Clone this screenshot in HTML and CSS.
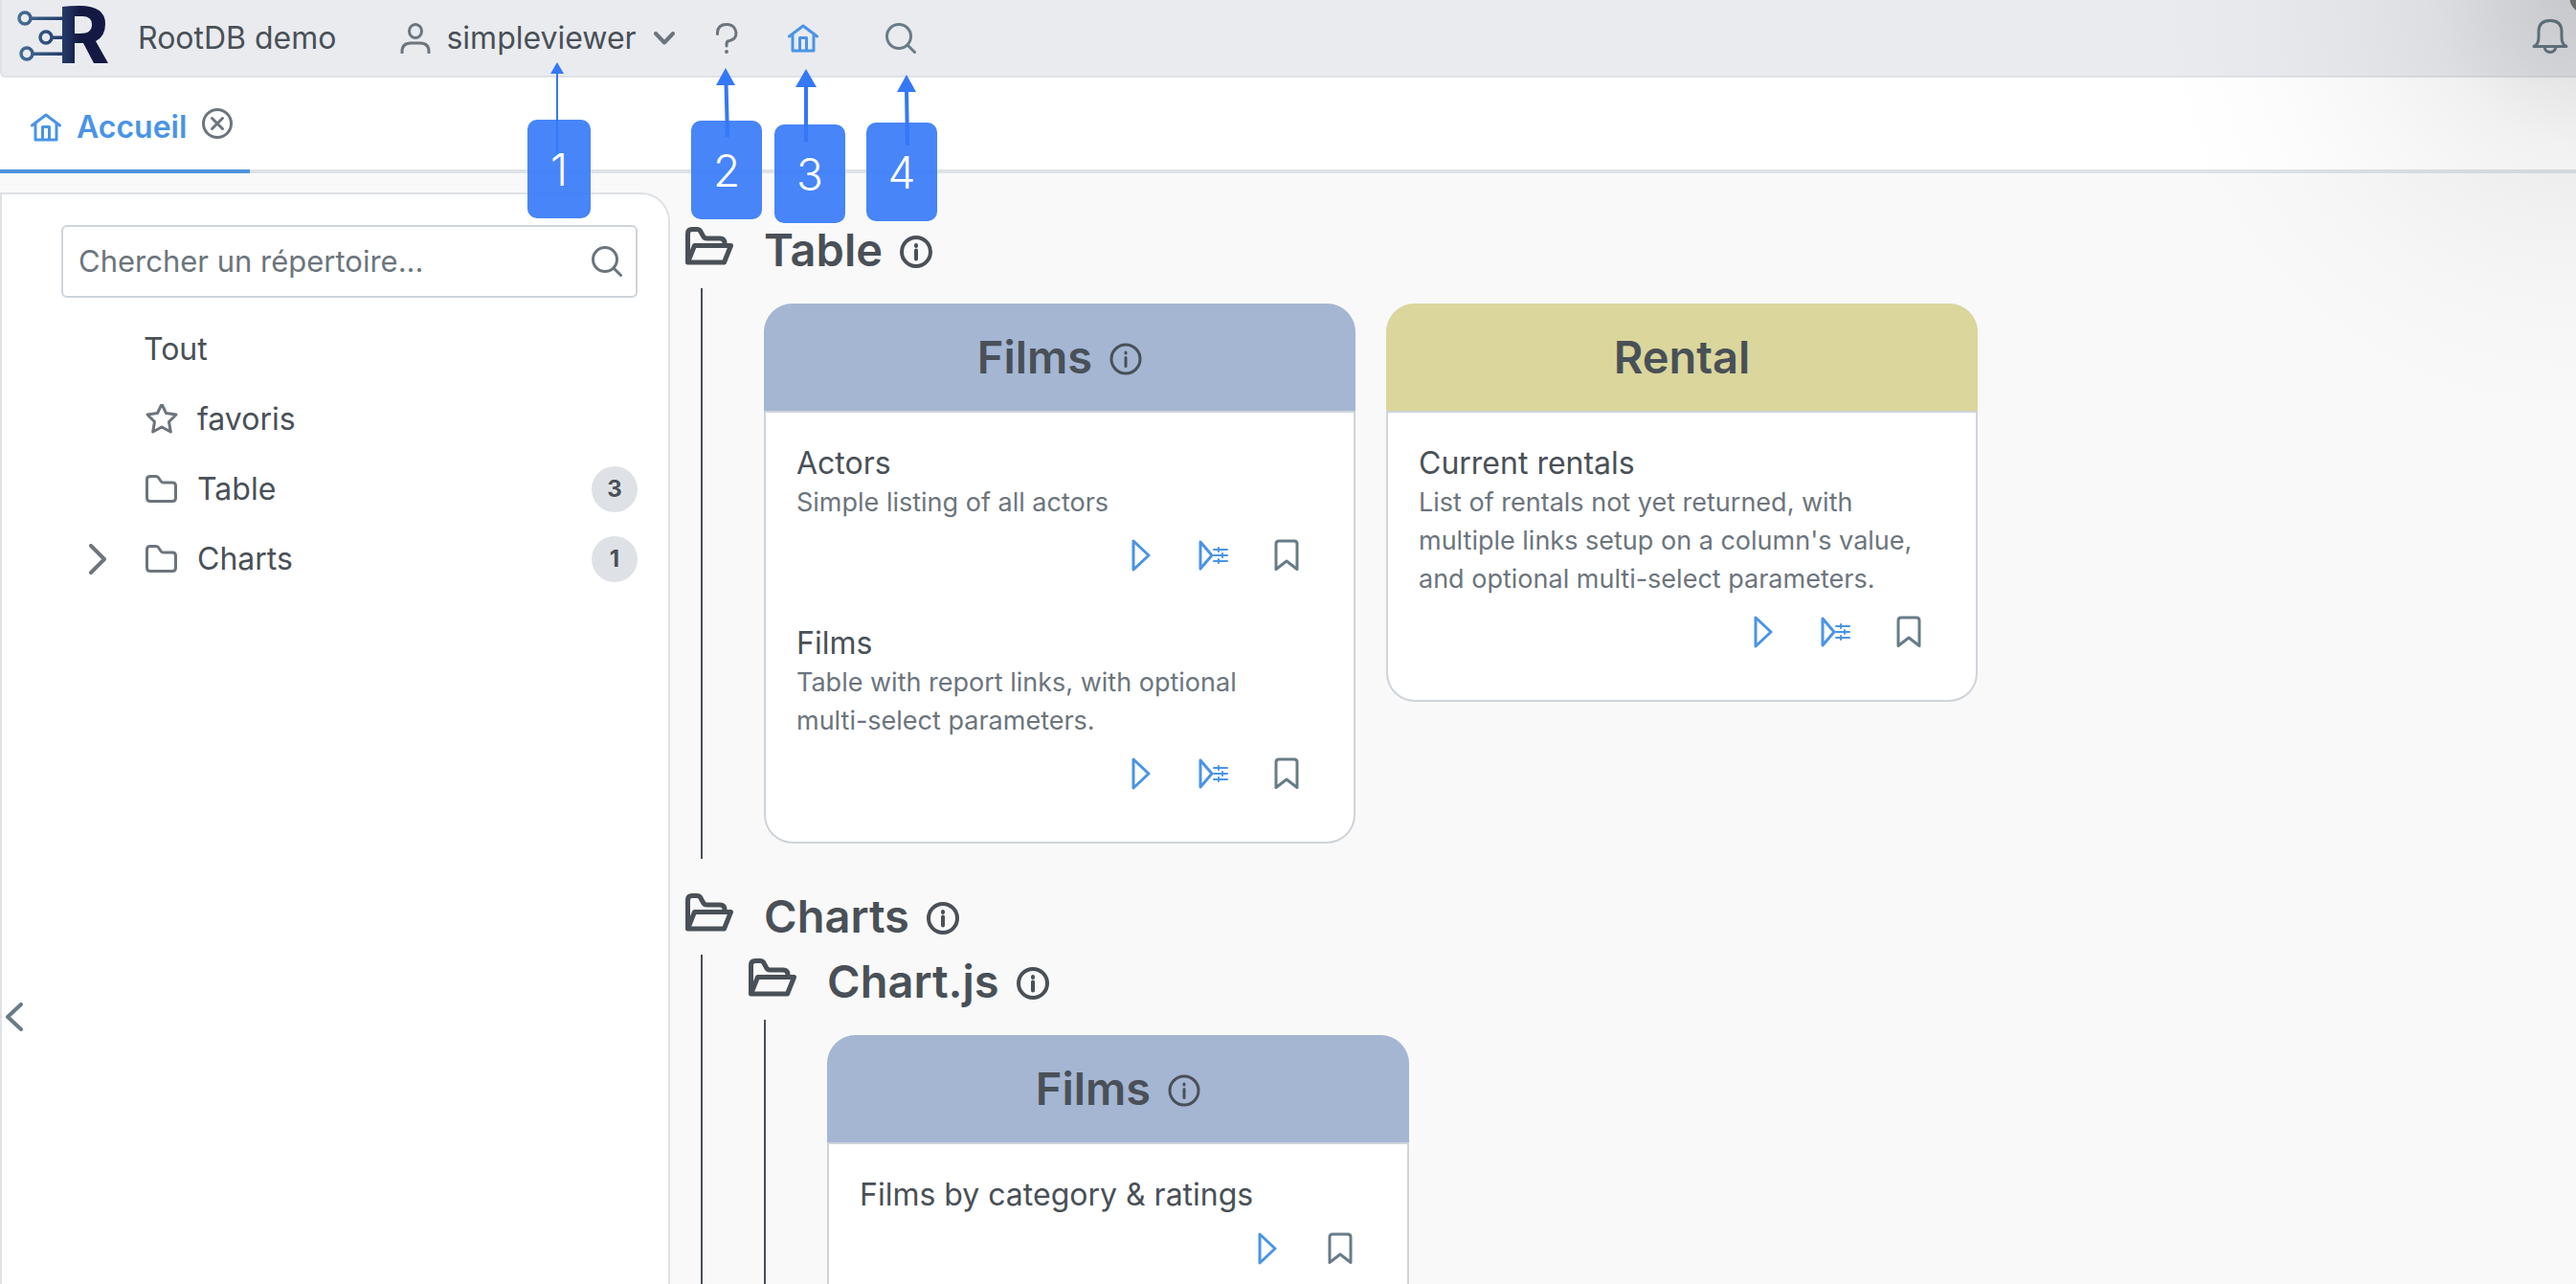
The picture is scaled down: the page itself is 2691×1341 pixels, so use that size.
FILE: index.html
```html
<!DOCTYPE html>
<html lang="fr">
<head>
<meta charset="utf-8">
<title>RootDB demo</title>
<link rel="stylesheet" href="styles.css">
</head>
<body>
<svg class="sprite" aria-hidden="true">
  <defs>
    <symbol id="i-home" viewBox="0 0 32 32"><path d="M1.500 14 16 3l14.500 11M5 12v17h22V12M12.500 29V15.500h7V29" /></symbol>
    <symbol id="i-search" viewBox="0 0 32 32"><circle cx="14" cy="14" r="12.500" /><path d="m23 23 7.500 7.500" /></symbol>
    <symbol id="i-info" viewBox="0 0 34 34"><circle cx="17" cy="17" r="15" /><path d="M17 15.500v9M17 10v1" /></symbol>
    <symbol id="i-folder" viewBox="0 0 34 30"><path d="M1.500 24V5q0-3.500 3.500-3.500h6q2 0 3 2l2 3q1 1.500 3 1.500h9q3.500 0 3.500 3.500V24q0 3.500-3.500 3.500H5q-3.500 0-3.500-3.500z" /></symbol>
    <symbol id="i-open" viewBox="0 0 50 40"><path d="M2.500 36V7q0-4.500 4.500-4.500h5q3 0 4 2.500l2.500 4.500q1 2.500 4 2.500H36q5 0 5 5v2M2.500 37l7-17.500H47.500L40.500 37z" /></symbol>
    <symbol id="i-play" viewBox="0 0 20 34"><path d="M2 2v30L18 17z" /></symbol>
    <symbol id="i-params" viewBox="0 0 32 34"><path d="M2 3v28L14 17z" /><path stroke-width="2" d="M16 11h14M16 17h14M16 23h14M21 9v4M25 15v4M21 21v4" /></symbol>
    <symbol id="i-mark" viewBox="0 0 26 34"><path d="M2 31.500V5q0-3 3-3h16q3 0 3 3v26.500L13 23z" /></symbol>
  </defs>
</svg>

<header class="topbar">
  <svg class="logo" viewBox="0 0 96 60" role="img" aria-label="RootDB">
    <defs><linearGradient id="lg" gradientUnits="userSpaceOnUse" x1="0" y1="0" x2="96" y2="0"><stop offset="0" stop-color="#457199"/><stop offset=".5" stop-color="#243a68"/><stop offset=".68" stop-color="#141943"/></linearGradient></defs>
    <g fill="none" stroke="url(#lg)" stroke-width="3.500"><circle cx="8" cy="13" r="6"/><circle cx="30" cy="33" r="6"/><circle cx="10" cy="50" r="6"/></g>
    <path fill="url(#lg)" d="M14 11.500h34v3.500H14zM36 31.500h12V35H36zM16 48.500h32V52H16z"/>
    <path fill="url(#lg)" fill-rule="evenodd" d="M47 1q8-1 18-1 27 0 27 19 0 13-10 18l13 23H80L69 39h-9v21H47zM60 11v18h6q12 0 12-9.500T66 11z"/>
  </svg>
  <span class="brand">RootDB demo</span>
  <button class="user" type="button">
    <svg class="icon32" viewBox="0 0 32 32"><ellipse cx="16" cy="8.500" rx="6.500" ry="7"/><path d="M2 31v-1q0-9 9-9h10q9 0 9 9v1"/></svg>
    <span>simpleviewer</span>
    <svg class="chev" viewBox="0 0 22 14"><path d="m2 2 9 9.500L20 2"/></svg>
  </button>
  <button class="bar-btn help" type="button" aria-label="Aide"><svg class="icon32" viewBox="0 0 32 32"><path d="M6.500 11.500V10Q7 1.500 16 1.500T26 10.500Q26 17 19 18.500q-3 .500-3 3.500v2"/><circle class="dot" cx="16" cy="30" r="1"/></svg></button>
  <button class="bar-btn home blue" type="button" aria-label="Accueil"><svg class="icon32"><use href="#i-home"/></svg></button>
  <button class="bar-btn find slate" type="button" aria-label="Rechercher"><svg class="icon32"><use href="#i-search"/></svg></button>
  <button class="bar-btn bell slate" type="button" aria-label="Notifications"><svg viewBox="0 0 38 38"><path d="M2 29.500q5-2 5-10V14Q7 2.500 19 2.500T31 14v5.500q0 8 5 10zM13 30q1 5.500 6 5.500T25 30"/></svg></button>
</header>

<nav class="tabs">
  <div class="tab">
    <a href="#accueil"><svg class="icon32"><use href="#i-home"/></svg>Accueil</a>
    <button type="button" aria-label="Fermer"><svg class="icon32" viewBox="0 0 32 32"><circle cx="16" cy="16" r="14.500"/><path d="m10.500 10.500 11 11M21.500 10.500l-11 11"/></svg></button>
  </div>
</nav>

<div class="layout">
  <aside class="sidebar">
    <label class="search"><input type="text" placeholder="Chercher un répertoire..." aria-label="Chercher un répertoire"><svg class="icon32"><use href="#i-search"/></svg></label>
    <ul class="tree">
      <li><span class="toggle"></span><a href="#tout">Tout</a></li>
      <li><span class="toggle"></span><a href="#favoris"><svg class="tree-icon" viewBox="0 2 34 32"><path d="m17 2 4.500 9.500L32 13l-7.500 7.500L26.300 31 17 26 7.700 31l1.800-10.500L2 13l10.500-1.500z"/></svg>favoris</a></li>
      <li><span class="toggle"></span><a href="#table"><svg class="tree-icon"><use href="#i-folder"/></svg>Table</a><span class="badge">3</span></li>
      <li><button class="toggle" type="button" aria-label="Ouvrir"><svg viewBox="0 0 18 32"><path d="m2 2 14 14L2 30"/></svg></button><a href="#charts"><svg class="tree-icon"><use href="#i-folder"/></svg>Charts</a><span class="badge">1</span></li>
    </ul>
    <button class="collapse slate" type="button" aria-label="Replier"><svg viewBox="0 0 18 30"><path d="M16 2 2 15l14 13"/></svg></button>
  </aside>

  <main class="content">
    <section class="folder">
      <h2><svg class="open"><use href="#i-open"/></svg>Table <svg class="info bold"><use href="#i-info"/></svg></h2>
      <div class="branch">
        <div class="cards">
          <article class="card">
            <h3 class="films">Films <svg class="info"><use href="#i-info"/></svg></h3>
            <div class="report">
              <h4>Actors</h4>
              <p>Simple listing of all actors</p>
              <div class="actions"><button type="button" aria-label="Exécuter"><svg class="play"><use href="#i-play"/></svg></button><button type="button" aria-label="Paramètres"><svg class="params"><use href="#i-params"/></svg></button><button class="slate" type="button" aria-label="Favori"><svg class="mark"><use href="#i-mark"/></svg></button></div>
            </div>
            <div class="report">
              <h4>Films</h4>
              <p>Table with report links, with optional multi-select parameters.</p>
              <div class="actions"><button type="button" aria-label="Exécuter"><svg class="play"><use href="#i-play"/></svg></button><button type="button" aria-label="Paramètres"><svg class="params"><use href="#i-params"/></svg></button><button class="slate" type="button" aria-label="Favori"><svg class="mark"><use href="#i-mark"/></svg></button></div>
            </div>
          </article>
          <article class="card">
            <h3 class="rental">Rental</h3>
            <div class="report">
              <h4>Current rentals</h4>
              <p>List of rentals not yet returned, with multiple links setup on a column's value, and optional multi-select parameters.</p>
              <div class="actions"><button type="button" aria-label="Exécuter"><svg class="play"><use href="#i-play"/></svg></button><button type="button" aria-label="Paramètres"><svg class="params"><use href="#i-params"/></svg></button><button class="slate" type="button" aria-label="Favori"><svg class="mark"><use href="#i-mark"/></svg></button></div>
            </div>
          </article>
        </div>
      </div>
    </section>
    <section class="folder">
      <h2><svg class="open"><use href="#i-open"/></svg>Charts <svg class="info bold"><use href="#i-info"/></svg></h2>
      <div class="branch">
        <section class="folder">
          <h2><svg class="open"><use href="#i-open"/></svg>Chart.js <svg class="info bold"><use href="#i-info"/></svg></h2>
          <div class="branch">
            <div class="cards">
              <article class="card narrow">
                <h3 class="films">Films <svg class="info"><use href="#i-info"/></svg></h3>
                <div class="report">
                  <h4>Films by category &amp; ratings</h4>
                  <div class="actions"><button type="button" aria-label="Exécuter"><svg class="play"><use href="#i-play"/></svg></button><button class="slate" type="button" aria-label="Favori"><svg class="mark"><use href="#i-mark"/></svg></button></div>
                </div>
              </article>
            </div>
          </div>
        </section>
      </div>
    </section>
  </main>
</div>

<div class="vignette"></div>
<div class="callout c1"><svg viewBox="0 0 30 95"><path d="M15 11v84" stroke-width="2"/><path class="head" d="m15 0 7 12H8z"/></svg>1</div>
<div class="callout c2"><svg viewBox="0 0 30 72"><path d="M15.500 16 17 72" stroke-width="4"/><path class="head" d="m15 0 10 18H5z"/></svg>2</div>
<div class="callout c3"><svg viewBox="0 0 30 76"><path d="M15 16v60" stroke-width="4"/><path class="head" d="m15 0 11 19H4z"/></svg>3</div>
<div class="callout c4"><svg viewBox="0 0 30 74"><path d="M15 16l1 58" stroke-width="4"/><path class="head" d="m15 0 10 18H5z"/></svg>4</div>
</body>
</html>
```
FILE: styles.css
```css
* { box-sizing: border-box; }

html { height: 100%; }

body {
  display: flex;
  flex-direction: column;
  height: 100%;
  margin: 0;
  overflow: hidden;
  position: relative;
  background: #f9f9f9;
  color: #495057;
  font: 400 32px/40px Inter, "Liberation Sans", sans-serif;
}

.sprite { position: absolute; width: 0; height: 0; }

svg {
  display: block;
  flex: none;
  fill: none;
  stroke: currentColor;
  stroke-width: 3;
  stroke-linecap: round;
  stroke-linejoin: round;
}

button {
  display: flex;
  align-items: center;
  justify-content: center;
  padding: 0;
  border: 0;
  background: none;
  color: #6c757d;
  font: inherit;
}

a { color: inherit; text-decoration: none; }

.icon32 { width: 32px; height: 32px; }
.slate { color: #687c88; }
.blue { color: #4a94e6; }

/* Top bar */
.topbar {
  display: flex;
  align-items: center;
  flex: none;
  height: 81px;
  padding: 0 8px 0 16px;
  border: solid #dee2e6;
  border-width: 0 0 2px 2px;
  border-radius: 0 0 0 6px;
  background: #e9ebef;
}

.logo { width: 96px; height: 60px; stroke: none; margin-bottom: 8px; }
.brand { margin-left: 30px; }
.user { gap: 16px; margin-left: 67px; color: #6c757d; }
.user span { color: #495057; }
.chev { width: 22px; height: 14px; margin-left: 2px; stroke-width: 4; }
.help { margin-left: 38px; }
.help .dot { stroke-width: 2; fill: currentColor; }
.home { margin-left: 48px; }
.find { margin-left: 70px; }
.bell { margin: 0 0 4px auto; }
.bell svg { width: 38px; height: 38px; }

/* Tabs */
.tabs {
  display: flex;
  flex: none;
  height: 100px;
  background: #fff;
  box-shadow: inset 0 -4px #dee2e6;
}

.tab {
  display: flex;
  align-items: center;
  gap: 16px;
  padding: 0 18px 0 32px;
  border-bottom: 4px solid #4f92dc;
}

.tab a {
  display: flex;
  align-items: center;
  gap: 16px;
  padding-top: 8px;
  color: #4a94e6;
  font-weight: 600;
}

/* Layout */
.layout { display: flex; flex: 1; min-height: 0; padding-top: 20px; }

.sidebar {
  position: relative;
  flex: none;
  width: 700px;
  padding: 32px 32px 0 62px;
  border: 2px solid #dee2e6;
  border-bottom: 0;
  border-radius: 0 30px 0 0;
  background: #fff;
}

.search {
  display: flex;
  align-items: center;
  height: 76px;
  padding: 0 14px 0 16px;
  border: 2px solid #ced4da;
  border-radius: 6px;
  color: #6c757d;
}

.search input {
  flex: 1;
  min-width: 0;
  padding: 0;
  border: 0;
  outline: 0;
  background: none;
  font: inherit;
  font-size: 31px;
  color: inherit;
}

.search input::placeholder { color: #6c757d; opacity: 1; }

.tree { margin: 17px 0 0; padding: 0; list-style: none; }
.tree li { display: flex; align-items: center; height: 73px; }
.tree a { display: flex; align-items: center; gap: 20px; flex: 1; }
.toggle { width: 32px; height: 32px; margin: 0 32px 0 22px; }
.toggle svg { width: 18px; height: 32px; stroke-width: 4; }
.tree-icon { width: 34px; height: 32px; margin-left: 2px; color: #6c757d; }

.badge {
  width: 48px;
  border-radius: 24px;
  background: #dee2e6;
  font-size: 24px;
  font-weight: 700;
  line-height: 48px;
  text-align: center;
}

.collapse { position: absolute; left: 4px; top: calc(50% + 275px); }
.collapse svg { width: 18px; height: 30px; stroke-width: 4; }

/* Folder tree content */
.content { flex: 1; min-width: 0; padding: 26px 0 0 16px; }

.folder > h2 {
  display: flex;
  align-items: center;
  margin: 0;
  font-size: 47px;
  font-weight: 600;
  line-height: 68px;
}

.open { width: 50px; height: 40px; margin: 0 32px 8px 0; stroke-width: 5; }
.info { width: 34px; height: 34px; margin: 4px 0 0 18px; }
.bold { stroke-width: 4; }

.branch {
  display: flow-root;
  margin: 6px 0 0 16px;
  padding-left: 48px;
  border-left: 2px solid #495057;
}

.branch .folder > h2 { margin-top: -6px; }
.folder + .folder { margin-top: 26px; }

.cards { display: flex; align-items: flex-start; gap: 32px; padding: 16px 0 16px 16px; }

.card {
  width: 618px;
  border: 2px solid #ced4da;
  border-top: 0;
  border-radius: 30px;
  background: #fff;
  padding-bottom: 38px;
}

.narrow { width: 608px; }

.card h3 {
  display: flex;
  align-items: center;
  justify-content: center;
  height: 114px;
  margin: 0 -2px;
  border-bottom: 2px solid #ced4da;
  border-radius: 30px 30px 0 0;
  font-size: 47px;
  font-weight: 600;
}

.films { background: #a4b6d2; }
.rental { background: #dad69c; }

.report { padding: 32px 32px 0; }
.report + .report { padding-top: 38px; }
.report h4 { margin: 0; font-size: 32px; font-weight: 400; line-height: 42px; }
.report p { margin: 0; padding-right: 24px; color: #6c757d; font-size: 27px; line-height: 40px; }

.actions { display: flex; justify-content: flex-end; padding-top: 2px; }
.actions button { width: 76px; height: 66px; }
.actions button:not(.slate) { color: #4a94e6; }
.play { width: 20px; height: 34px; }
.params { width: 32px; height: 34px; }
.mark { width: 26px; height: 34px; }

/* Dark corner fade */
.vignette {
  position: absolute;
  top: 0;
  right: 0;
  width: 440px;
  height: 440px;
  pointer-events: none;
  background:
    radial-gradient(circle at calc(100% + 9px) -2px, #6b6b6b 15px, transparent 16px),
    radial-gradient(circle at 100% 0, rgba(0, 0, 0, .14) 12px, rgba(0, 0, 0, .1) 80px, rgba(0, 0, 0, .055) 150px, rgba(0, 0, 0, .03) 230px, rgba(0, 0, 0, .01) 330px, transparent 440px);
}

/* Numbered callouts */
.callout {
  position: absolute;
  width: 74px;
  height: 103px;
  border-radius: 10px;
  background: rgba(60, 125, 249, .94);
  color: #fff;
  font-size: 46px;
  font-weight: 300;
  line-height: 105px;
  text-align: center;
}

.callout svg {
  position: absolute;
  width: 30px;
  stroke: #3478f6;
  stroke-linecap: butt;
}

.callout .head { fill: #3478f6; stroke: none; }
.c1 { left: 551px; top: 125px; width: 66px; }
.c2 { left: 722px; top: 126px; }
.c3 { left: 809px; top: 130px; }
.c4 { left: 905px; top: 128px; }
.c1 svg { left: 16px; top: -60px; }
.c2 svg { left: 21px; top: -55px; }
.c3 svg { left: 18px; top: -58px; }
.c4 svg { left: 27px; top: -50px; }
```
